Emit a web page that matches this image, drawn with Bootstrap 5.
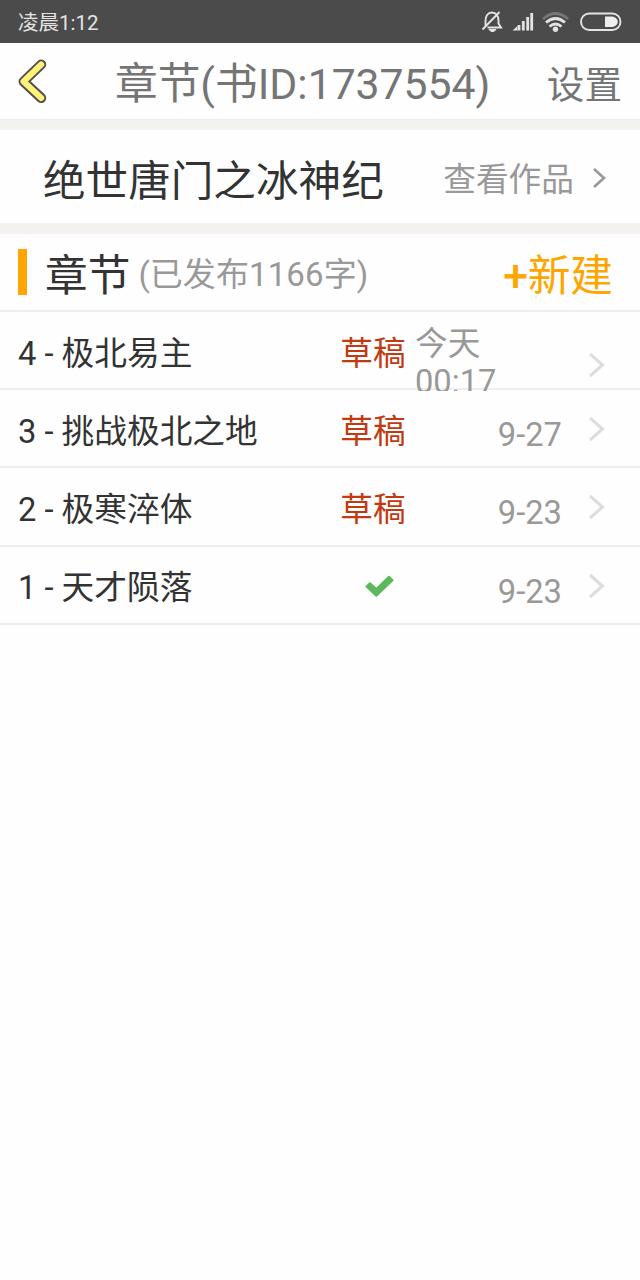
<!DOCTYPE html>
<html lang="zh-CN">
<head>
<meta charset="utf-8">
<meta name="viewport" content="width=device-width, initial-scale=1">
<title>章节</title>
<link href="https://cdn.jsdelivr.net/npm/bootstrap@5.3.0/dist/css/bootstrap.min.css" rel="stylesheet">
<style>
body { font-family: Roboto, "Noto Sans CJK SC", sans-serif; color: #333; background: #fefefe; font-size: 32.7px; line-height: 38px; overflow: hidden; }
svg { display: block; flex: none; }
.statusbar { height: 42.5px; background: #4b4b4b; color: #e4e4e4; font-size: 20.5px; line-height: 24px; padding: 2px 18px 0; }
.statusbar span { padding-top: 2px; }
.topbar { height: 77px; color: #757575; padding: 4px 18px 0; border-bottom: 1px solid #eee; }
.topbar h1 { font-size: 42.7px; line-height: 50px; font-weight: 400; margin-left: 67px; padding-top: 2px; }
.topbar .back { margin-bottom: 3px; }
.topbar .setup { font-size: 37.6px; line-height: 44px; color: #757575; padding-top: 4px; }
.gapline { height: 10.5px; background: #f3f2ee; }
.book { height: 93px; padding: 5px 34px 0 43px; font-size: 42.6px; line-height: 50px; }
.book > span { padding-top: 3px; }
.viewlink { color: #999; font-size: 32.7px; line-height: 38px; gap: 18px; }
.viewlink span { padding-top: 2px; }
.viewlink svg { margin-bottom: 2px; }
.section-head { height: 78.5px; padding: 0 27px 0 18px; border-bottom: 2px solid #eee; }
.bar { width: 9px; height: 46px; background: #ffa500; margin-right: 18px; }
.section-head h2 { font-size: 42.7px; line-height: 50px; font-weight: 400; padding-top: 8px; }
.muted { color: #999; font-size: 33px; letter-spacing: .1px; padding-top: 7px; }
.create { color: #ffa500; font-size: 42.7px; line-height: 50px; padding-top: 8px; }
.create b { font-weight: 400; -webkit-text-stroke: .9px #ffa500; }
.chapter { height: 78.2px; border-bottom: 2px solid #eee; padding: 0 35px 0 18px; }
.name { width: 316px; margin-top: 22.5px; }
.state { width: 78px; height: 38px; margin-top: 22.5px; color: #c13a10; }
.state svg { margin: -4px -12px 0 0; }
.when { width: 150px; margin-top: 26px; color: #999; text-align: right; }
.when.wrapped { width: 147px; height: 66px; margin-top: 12.500px; margin-left: 3px; text-align: left; overflow: hidden; }
.go { margin-top: 26px; margin-left: auto; }
.wrapped + .go { margin-top: 40px; }
</style>
</head>
<body>
<div class="statusbar d-flex align-items-center justify-content-between">
  <span>凌晨1:12</span>
  <svg width="142" height="26" viewBox="480 8 142 26" fill="none" stroke="#e4e4e4" stroke-width="1.9">
    <path d="M485.500 25V20C485.500 15 488 11.500 492 11.500C496 11.500 498.500 15 498.500 19V22.500L501 26.500H487.500M482.500 28.500L499.500 11"/>
    <path d="M489 28.500H496L494 30.500H491Z" fill="#e4e4e4" stroke-width="1"/>
    <path d="M519 29.500V24M523.300 29.500V20M527.700 29.500V16M531.700 29.500V12" stroke-width="2.800"/>
    <path d="M512.500 29.500L517.500 25V29.500Z" fill="#e4e4e4" stroke="none"/>
    <path d="M543 18Q555.500 7 568 18" stroke="#777" stroke-width="2.700"/>
    <path d="M546 21.500Q555.500 13.500 565 21.500M549.500 25.500Q555.500 20.500 561.500 25.500" stroke-width="2.700"/>
    <circle cx="555.500" cy="28.300" r="2.700" fill="#e4e4e4" stroke="none"/>
    <rect x="581" y="12.500" width="39.500" height="16.500" rx="8.200"/>
    <path d="M605 15.500H611C620 15.500 620 26 611 26H605Z" fill="#eee" stroke="none"/>
  </svg>
</div>
<header class="topbar d-flex align-items-center">
  <svg class="back" width="30" height="46" viewBox="18 58 30 46" fill="none" stroke-linecap="round" stroke-linejoin="round">
    <path d="M41.200 64.500L23.500 81.500L41.200 98" stroke="#554f48" stroke-width="10"/>
    <path d="M41.200 64.500L23.500 81.500L41.200 98" stroke="#fff27a" stroke-width="6"/>
  </svg>
  <h1 class="mb-0">章节(书ID:1737554)</h1>
  <span class="setup ms-auto">设置</span>
</header>
<div class="gapline"></div>
<section class="book d-flex align-items-center justify-content-between">
  <span>绝世唐门之冰神纪</span>
  <a class="viewlink d-flex align-items-center text-decoration-none"><span>查看作品</span>
    <svg width="14" height="22" fill="none" stroke="#999" stroke-width="2.700"><path d="M2 2L12 11L2 20"/></svg></a>
</section>
<div class="gapline"></div>
<section class="section-head d-flex align-items-center">
  <div class="bar"></div>
  <h2 class="mb-0">章节</h2>
  <span class="muted ms-2">(已发布1166字)</span>
  <span class="create ms-auto"><b>+</b>新建</span>
</section>
<main>
  <div class="chapter d-flex">
    <div class="name">4 - 极北易主</div><div class="state text-center">草稿</div>
    <div class="when wrapped">今天<br>00:17</div>
    <svg class="go" width="17" height="26" fill="none" stroke="#ddd" stroke-width="3"><path d="M2 2L14.500 13L2 24"/></svg>
  </div>
  <div class="chapter d-flex">
    <div class="name">3 - 挑战极北之地</div><div class="state text-center">草稿</div>
    <div class="when">9-27</div>
    <svg class="go" width="17" height="26" fill="none" stroke="#ddd" stroke-width="3"><path d="M2 2L14.500 13L2 24"/></svg>
  </div>
  <div class="chapter d-flex">
    <div class="name">2 - 极寒淬体</div><div class="state text-center">草稿</div>
    <div class="when">9-23</div>
    <svg class="go" width="17" height="26" fill="none" stroke="#ddd" stroke-width="3"><path d="M2 2L14.500 13L2 24"/></svg>
  </div>
  <div class="chapter d-flex">
    <div class="name">1 - 天才陨落</div>
    <div class="state d-flex align-items-center justify-content-center">
      <svg width="29" height="22" viewBox="365 574 29 22" fill="#5cb85c" stroke="#5cb85c" stroke-width="2" stroke-linejoin="round"><path d="M366.500 585.500L370 582.200L376.300 588L389 575.800L392.500 579.200L376.300 594.800Z"/></svg>
    </div>
    <div class="when">9-23</div>
    <svg class="go" width="17" height="26" fill="none" stroke="#ddd" stroke-width="3"><path d="M2 2L14.500 13L2 24"/></svg>
  </div>
</main>
<script src="https://cdn.jsdelivr.net/npm/bootstrap@5.3.0/dist/js/bootstrap.bundle.min.js"></script>
</body>
</html>
